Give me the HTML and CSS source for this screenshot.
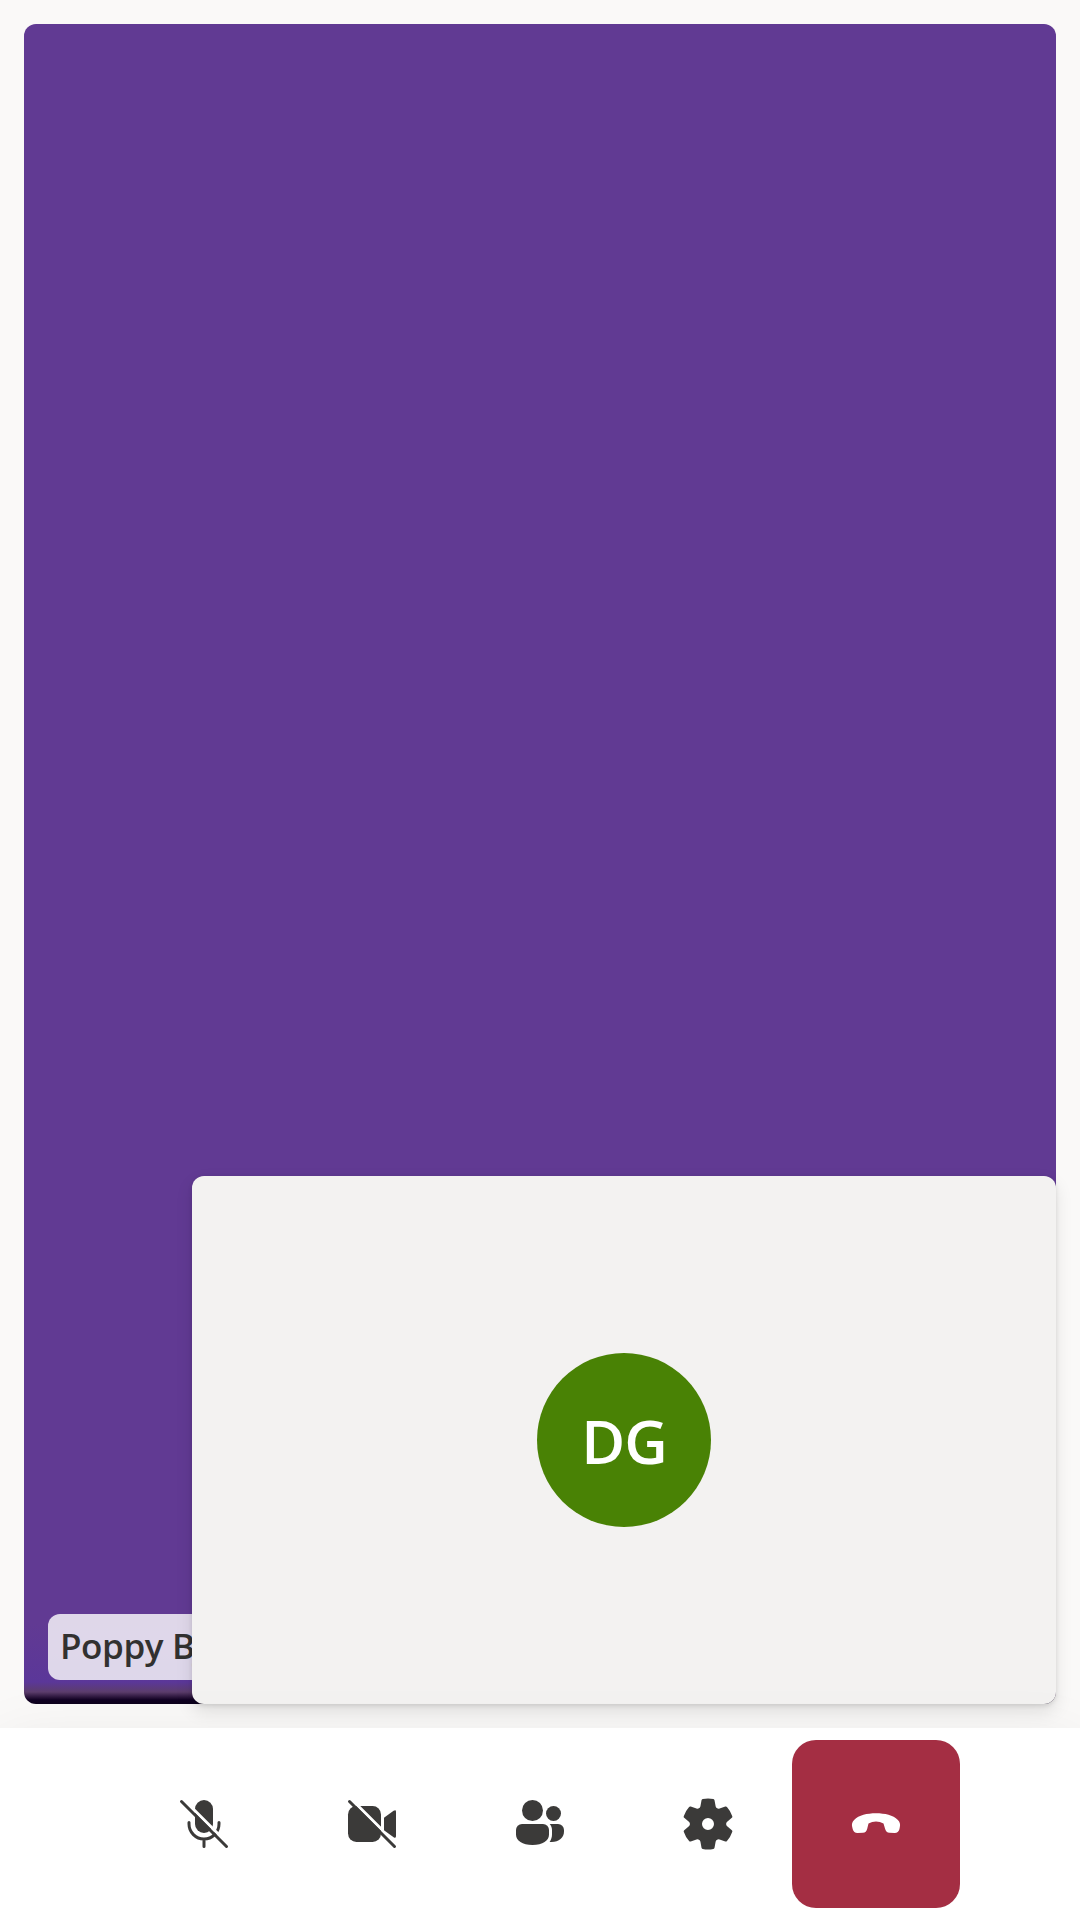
FILE: index.html
```html
<!DOCTYPE html>
<html lang="en">
<head>
<meta charset="utf-8">
<title>Call</title>
<link rel="stylesheet" href="styles.css">
</head>
<body>
<main class="stage">
  <section class="remote">
    <div class="name">Poppy Bjørgen</div>
  </section>
  <section class="local">
    <div class="avatar"><span class="initials">DG</span></div>
  </section>
</main>
<footer class="controls">
  <button class="control" aria-label="Unmute">
    <svg class="icon" viewBox="0 0 20 20"><rect x="7" y="2" width="6" height="11" rx="3"/><path class="line" d="M5 9.5V10a5 5 0 0 0 10 0v-.5M10 15v2.5"/><path class="gap" d="M2.4 1 18.4 17"/><path class="line" d="m2.5 2.5 15 15"/></svg>
  </button>
  <button class="control" aria-label="Turn camera on">
    <svg class="icon" viewBox="0 0 20 20"><rect x="2" y="4" width="11" height="12" rx="2.8"/><path d="M14 7.95 17.2 5.6q.8-.5.8.3v8.2q0 .8-.8.3L14 12.05z"/><path class="gap" d="M2.4 1 13.5 12.1"/><path class="line" d="m2.5 2.5 15 15"/></svg>
  </button>
  <button class="control" aria-label="People">
    <svg class="icon" viewBox="0 0 20 20"><circle cx="7.5" cy="5.5" r="3.5"/><circle cx="14.5" cy="6.5" r="2.5"/><path d="M4 10h7a2 2 0 0 1 2 2v1.5C13 15.6 10.9 17 7.5 17S2 15.6 2 13.5V12a2 2 0 0 1 2-2z"/><path d="M13.2 15.96c.54-.75.8-1.56.8-2.46V12c0-.77-.29-1.47-.76-2H16a2 2 0 0 1 2 2v.5c0 2.1-1.7 3.5-4.1 3.5z"/></svg>
  </button>
  <button class="control" aria-label="Settings">
    <svg class="icon" viewBox="0 0 20 20"><path d="M1.91 7.38A8.5 8.5 0 0 1 3.7 4.3a.5.5 0 0 1 .54-.13l1.92.68a1 1 0 0 0 1.32-.76l.36-2a.5.5 0 0 1 .4-.4 8.53 8.53 0 0 1 3.55 0c.2.04.35.2.38.4l.37 2a1 1 0 0 0 1.32.76l1.92-.68a.5.5 0 0 1 .54.13 8.5 8.5 0 0 1 1.78 3.08c.06.2 0 .4-.15.54l-1.56 1.32a1 1 0 0 0 0 1.52l1.56 1.32a.5.5 0 0 1 .15.54 8.5 8.5 0 0 1-1.78 3.08.5.5 0 0 1-.54.13l-1.92-.68a1 1 0 0 0-1.32.76l-.37 2a.5.5 0 0 1-.38.4 8.53 8.53 0 0 1-3.56 0 .5.5 0 0 1-.39-.4l-.36-2a1 1 0 0 0-1.32-.76l-1.92.68a.5.5 0 0 1-.54-.13 8.5 8.5 0 0 1-1.78-3.08.5.5 0 0 1 .15-.54l1.56-1.32a1 1 0 0 0 0-1.52L2.06 7.92a.5.5 0 0 1-.15-.54ZM8 10a2 2 0 1 0 4 0 2 2 0 0 0-4 0Z"/></svg>
  </button>
  <button class="control hangup" aria-label="Leave">
    <svg class="icon" viewBox="0 0 20 20"><path d="m17.96 10.94-.16.8c-.2.8-.8 1.3-1.6 1.26l-1.73-.1c-.75-.07-1.2-.5-1.42-1.25l-.55-1.85A6.6 6.6 0 0 0 10 9.2a6.6 6.6 0 0 0-2.5.6L7.05 11.65c-.2.75-.65 1.18-1.4 1.25l-1.75.1c-.85.04-1.45-.46-1.65-1.26l-.2-.8c-.2-.86 0-1.65.65-2.3C4.3 7.1 7 6.45 10 6.45s5.7.65 7.3 2.2c.65.64.85 1.43.66 2.29z"/></svg>
  </button>
</footer>
</body>
</html>
```
FILE: styles.css
```css
* { box-sizing: border-box; }

body {
  margin: 0;
  height: 1920px;
  display: flex;
  flex-direction: column;
  overflow: hidden;
  background: #faf9f8;
  font-family: "Open Sans", "Noto Sans", sans-serif;
}

.stage {
  flex: 1;
  display: grid;
  padding: 24px;
}

.remote,
.local {
  grid-area: 1 / 1;
  border-radius: 12px;
}

.remote {
  display: flex;
  align-items: flex-end;
  justify-content: flex-start;
  padding: 24px;
  background: linear-gradient(to bottom, #613a93 0, #613a93 1600px, #5b3799 1658px, #5c3d6c 1668px, #100022 1676px, #0d001c 100%);
}

.name {
  height: 66px;
  padding: 0 12px;
  border-radius: 12px;
  background: rgba(255, 255, 255, .8);
  color: #323130;
  font-size: 35px;
  font-weight: 550;
  line-height: 63px;
  letter-spacing: -.4px;
  white-space: nowrap;
}

.local {
  align-self: end;
  justify-self: end;
  width: 864px;
  height: 528px;
  display: flex;
  align-items: center;
  justify-content: center;
  background: #f3f2f1;
  box-shadow: 0 7.68px 17.28px rgba(0, 0, 0, .1), 0 1.44px 4.32px rgba(0, 0, 0, .1);
}

.avatar {
  width: 174px;
  height: 174px;
  display: flex;
  align-items: center;
  justify-content: center;
  border-radius: 50%;
  background: #498205;
  color: #fff;
  font-size: 60px;
  font-weight: 550;
  letter-spacing: -1px;
}

.initials { padding-top: 2px; }

.controls {
  height: 192px;
  display: flex;
  justify-content: center;
  padding: 12px 0;
  background: #fff;
  box-shadow: 0 15.36px 60px rgba(0, 0, 0, .08);
}

.control {
  width: 168px;
  height: 168px;
  display: flex;
  align-items: center;
  justify-content: center;
  padding: 0;
  border: 0;
  border-radius: 24px;
  background: none;
  color: #3b3a39;
}

.hangup {
  background: #a42e43;
  color: #fff;
}

.icon {
  width: 60px;
  height: 60px;
  fill: currentColor;
}

.line,
.gap {
  fill: none;
  stroke: currentColor;
  stroke-width: 1;
  stroke-linecap: round;
}

.gap { stroke: #fff; }
```
